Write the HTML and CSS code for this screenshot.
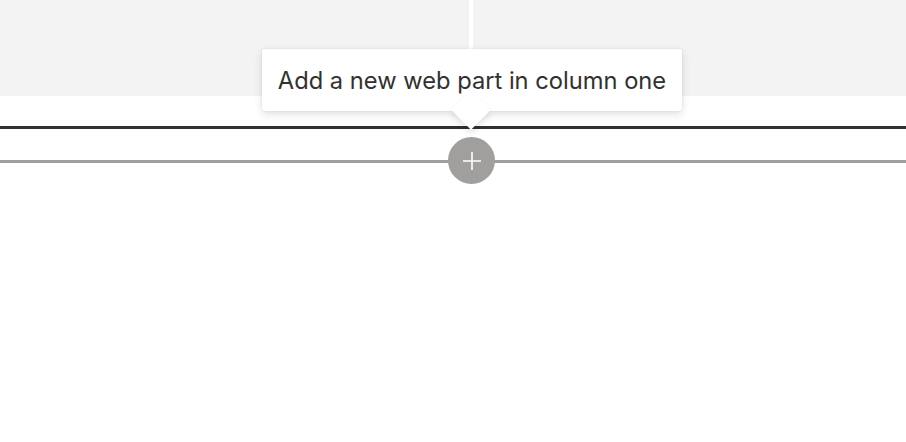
FILE: index.html
```html
<!DOCTYPE html>
<html>
<head>
<meta charset="utf-8">
<link rel="stylesheet" href="styles.css">
</head>
<body>
<div class="canvas">
  <div class="columns">
    <div class="column"></div>
    <div class="column"></div>
  </div>
  <div class="section-edge">
    <div class="line line-dark"></div>
    <div class="line line-gray"></div>
  </div>
  <button class="add-btn" aria-label="Add a new web part in column one">
    <svg width="22" height="22" viewBox="0 0 22 22"><path d="M11 2v18M2 11h18" stroke="#fff" stroke-width="1.6" fill="none"/></svg>
  </button>
  <div class="tooltip">
    <span class="tooltip-text">Add a new web part in column one</span>
    <div class="beak"></div>
  </div>
</div>
</body>
</html>
```
FILE: styles.css
```css
html, body {
  margin: 0;
  padding: 0;
  background: #fff;
}
.canvas {
  position: relative;
  width: 906px;
  height: 442px;
  overflow: hidden;
  font-family: Inter, "Open Sans", sans-serif;
}
.columns {
  display: grid;
  grid-template-columns: 469px 1fr;
  column-gap: 4px;
  height: 96px;
}
.column {
  background: #f3f3f3;
}
.section-edge {
  padding-top: 30px;
}
.line {
  height: 3px;
}
.line-dark {
  background: #323130;
  margin-bottom: 31px;
}
.line-gray {
  background: #a19f9d;
}
.add-btn {
  position: absolute;
  left: 448px;
  top: 137px;
  width: 47px;
  height: 47px;
  border-radius: 50%;
  border: none;
  padding: 0;
  background: #a19f9d;
  display: flex;
  align-items: center;
  justify-content: center;
}
.tooltip {
  position: absolute;
  left: 262px;
  top: 49px;
  width: 420px;
  height: 62px;
  background: #fff;
  border-radius: 2px;
  box-shadow: 0 3px 8px rgba(0,0,0,0.13), 0 0 2px rgba(0,0,0,0.1);
  display: flex;
  align-items: center;
  justify-content: center;
}
.tooltip-text {
  position: relative;
  z-index: 2;
  font-size: 23.7px;
  color: #323130;
  white-space: nowrap;
  padding-top: 1px;
}
.beak {
  position: absolute;
  left: 195px;
  top: 47px;
  width: 28px;
  height: 28px;
  background: #fff;
  transform: rotate(45deg);
  box-shadow: 3px 3px 6px rgba(0,0,0,0.1);
  z-index: 1;
}
```
